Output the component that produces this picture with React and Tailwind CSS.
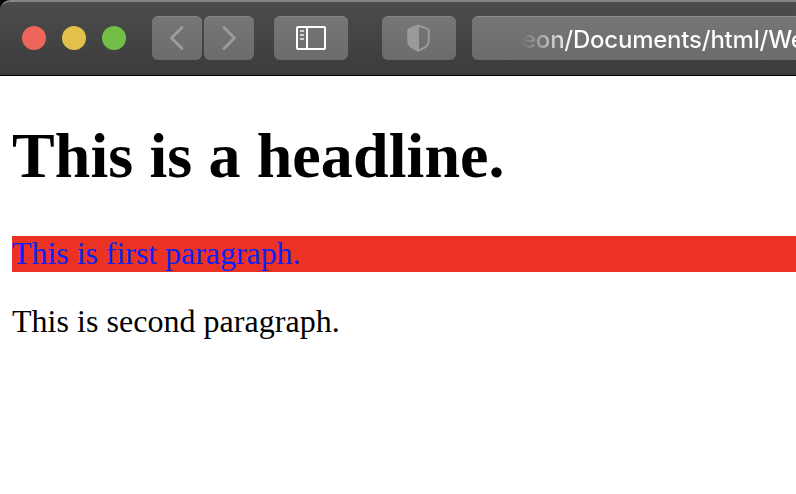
const button =
  "flex h-11 shrink-0 items-center justify-center rounded-[6px] border-t border-[#868686] bg-linear-to-b from-[#767676] to-[#6c6c6c] pb-px";

function Toolbar() {
  return (
    <header className="flex h-[76px] items-start overflow-hidden rounded-tl-[10px] border-t-2 border-b border-t-[#858585] border-b-black bg-linear-to-b from-[#4c4c4c] to-[#3c3c3c] pt-[14px] pl-[22px]">
      <div className="flex h-11 shrink-0 items-center gap-4">
        <span className="size-6 rounded-full bg-[#ee6559]" />
        <span className="size-6 rounded-full bg-[#e1c04c]" />
        <span className="size-6 rounded-full bg-[#72be47]" />
      </div>
      <div className="ml-[26px] flex shrink-0 gap-0.5">
        <button className={`${button} w-[50px]`} aria-label="Back">
          <svg width="16" height="26" viewBox="0 0 16 26" fill="none" stroke="#9d9d9d" strokeWidth="2.8" strokeLinecap="round" strokeLinejoin="round">
            <path d="M13 2.500 2.500 13 13 23.500" />
          </svg>
        </button>
        <button className={`${button} w-[50px]`} aria-label="Forward">
          <svg width="16" height="26" viewBox="0 0 16 26" fill="none" stroke="#9d9d9d" strokeWidth="2.8" strokeLinecap="round" strokeLinejoin="round">
            <path d="M3 2.500 13.500 13 3 23.500" />
          </svg>
        </button>
      </div>
      <button className={`${button} ml-5 w-[74px]`} aria-label="Sidebar">
        <svg width="30" height="24" viewBox="0 0 30 24" fill="none" stroke="#fff" strokeWidth="2">
          <rect x="1" y="1" width="28" height="22" rx="1" />
          <path d="M11 1v22" />
          <path d="M4 5h4M4 9h4M4 13h4" stroke="#d0d0d0" />
        </svg>
      </button>
      <button className={`${button} ml-[34px] w-[74px]`} aria-label="Privacy report">
        <svg width="24" height="28" viewBox="0 0 24 28" fill="none">
          <path d="M11.500 1.500 2.500 4.900Q1.200 5.400 1.200 6.700V17C1.200 21 3.500 23 11.500 26.800 19.500 23 21.800 21 21.800 17V6.700Q21.800 5.400 20.500 4.900Z" stroke="#9a9a9a" strokeWidth="2" strokeLinejoin="round" />
          <path d="M12 1.500H11.500L2.500 4.900Q1.200 5.400 1.200 6.700V17C1.200 21 3.500 23 11.500 26.800H12Z" fill="#9a9a9a" />
        </svg>
      </button>
      <div className="ml-4 flex h-11 w-[400px] shrink-0 items-center rounded-[6px] border-t border-[#8c8c8c] bg-linear-to-b from-[#767676] to-[#6c6c6c] pt-[3px] pl-[50px]">
        <span className="bg-linear-to-r from-[#ffffff00] to-white to-[50px] bg-clip-text font-['Inter',sans-serif] text-[24px] leading-8 font-medium tracking-[-0.23px] whitespace-nowrap text-transparent">
          eon/Documents/html/We
        </span>
      </div>
    </header>
  );
}

export default function App() {
  return (
    <div className="h-[494px] w-[796px] overflow-hidden bg-black">
      <Toolbar />
      <main className="h-[418px] bg-white pt-[44px] pl-3 font-['Liberation_Serif',serif] text-[32px] text-black">
        <h1 className="text-[64px] leading-[72px] font-bold tracking-[0.1px]">This is a headline.</h1>
        <p className="mt-11 h-9 bg-[#ec3323] leading-[34px] tracking-[-0.05px] text-[#0a22f5]">
          This is first paragraph.
        </p>
        <p className="mt-8 h-9 leading-[34px] tracking-[0.03px]">This is second paragraph.</p>
      </main>
    </div>
  );
}
